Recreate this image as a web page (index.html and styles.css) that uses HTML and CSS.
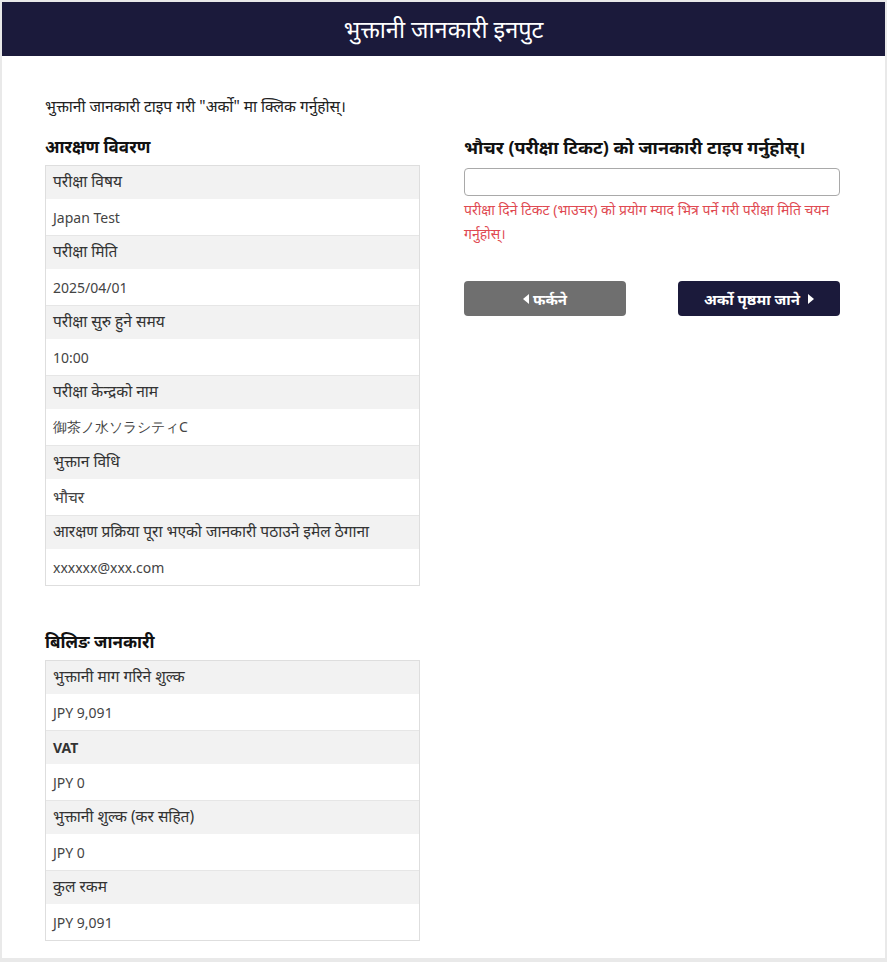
FILE: index.html
```html
<!DOCTYPE html>
<html lang="ne">

<head>
  <meta charset="UTF-8" />
  <meta name="viewport" content="width=device-width, initial-scale=1.0" />
  <title>भुक्तानी जानकारी इनपुट</title>
  <link rel="stylesheet" href="styles.css">
</head>

<body>
  <div class="pagina">
    <header>
      <h1>भुक्तानी जानकारी इनपुट</h1>
    </header>

    <main>
      <p class="intro">भुक्तानी जानकारी टाइप गरी "अर्को" मा क्लिक गर्नुहोस्।</p>

      <div class="columnas">
        <div class="columna">
          <h2>आरक्षण विवरण</h2>
          <dl class="tabla">
            <dt>परीक्षा विषय</dt>
            <dd>Japan Test</dd>
            <dt>परीक्षा मिति</dt>
            <dd>2025/04/01</dd>
            <dt>परीक्षा सुरु हुने समय</dt>
            <dd>10:00</dd>
            <dt>परीक्षा केन्द्रको नाम</dt>
            <dd>御茶ノ水ソラシティC</dd>
            <dt>भुक्तान विधि</dt>
            <dd class="deva">भौचर</dd>
            <dt>आरक्षण प्रक्रिया पूरा भएको जानकारी पठाउने इमेल ठेगाना</dt>
            <dd>xxxxxx@xxx.com</dd>
          </dl>

          <h2 class="billing">बिलिङ जानकारी</h2>
          <dl class="tabla">
            <dt>भुक्तानी माग गरिने शुल्क</dt>
            <dd>JPY 9,091</dd>
            <dt class="negrita">VAT</dt>
            <dd>JPY 0</dd>
            <dt>भुक्तानी शुल्क (कर सहित)</dt>
            <dd>JPY 0</dd>
            <dt>कुल रकम</dt>
            <dd>JPY 9,091</dd>
          </dl>
        </div>

        <div class="columna">
          <h2 class="titulo-voucher">भौचर (परीक्षा टिकट) को जानकारी टाइप गर्नुहोस्।</h2>
          <input type="text" class="campo" id="voucher">
          <p class="error">परीक्षा दिने टिकट (भाउचर) को प्रयोग म्याद भित्र पर्ने गरी परीक्षा मिति चयन गर्नुहोस्।</p>

          <div class="botones">
            <button class="btn btn-volver"><span class="flecha izq"></span>फर्कने</button>
            <button class="btn btn-siguiente">अर्को पृष्ठमा जाने<span class="flecha der"></span></button>
          </div>
        </div>
      </div>
    </main>
  </div>
</body>

</html>
```

FILE: styles.css
```css
body {
  font-family: "Noto Sans", "Open Sans", sans-serif;
  margin: 0;
  background-color: #e9e9e9;
  color: #333;
  padding: 2px;
}

.pagina {
  background-color: white;
  height: 956px;
}

header {
  background-color: #1b1a3b;
  color: white;
  height: 54px;
  display: flex;
  justify-content: center;
  align-items: center;
}

header h1 {
  margin: 0;
  font-size: 23.5px;
  font-weight: normal;
}

main {
  padding: 39px 45px 0 43px;
}

.intro {
  margin: 0 0 18px;
  font-size: 15.5px;
  color: #222;
}

.columnas {
  display: grid;
  grid-template-columns: 375px 376px;
  gap: 44px;
}

h2 {
  margin: 0 0 6px;
  font-size: 17px;
  font-weight: bold;
  color: #111;
  line-height: 24px;
}

h2.billing {
  margin-top: 44px;
}

h2.titulo-voucher {
  font-size: 18px;
  margin-bottom: 4px;
}

.tabla {
  margin: 0;
  border: 1px solid #dedede;
  font-size: 14px;
}

.tabla dt,
.tabla dd {
  margin: 0;
  padding: 0 7px;
  display: flex;
  align-items: center;
}

.tabla dt {
  background-color: #f2f2f2;
  height: 33px;
  box-sizing: border-box;
  padding-bottom: 3px;
  color: #333;
  font-size: 15.5px;
}

.tabla dt.negrita {
  font-size: 14px;
  font-weight: bold;
  padding-bottom: 0;
}

.tabla dd {
  background-color: white;
  height: 36px;
  border-bottom: 1px solid #e6e6e6;
  color: #444;
}

.tabla dd.deva {
  font-size: 15.5px;
}

.tabla dd:last-child {
  border-bottom: none;
}

.campo {
  display: block;
  box-sizing: border-box;
  width: 100%;
  height: 28px;
  margin-top: 9px;
  border: 1px solid #a9a9a9;
  border-radius: 4px;
  font-size: 14px;
  padding: 0 6px;
}

.error {
  margin: 2px 0 0;
  color: #e04a52;
  font-size: 14px;
  line-height: 24px;
}

.botones {
  display: flex;
  justify-content: space-between;
  margin-top: 35px;
}

.btn {
  width: 162px;
  height: 35px;
  border: none;
  border-radius: 4px;
  color: white;
  font-family: inherit;
  font-size: 15px;
  font-weight: bold;
  display: flex;
  justify-content: center;
  align-items: center;
  gap: 4px;
  cursor: pointer;
}

.btn-volver {
  background-color: #6f6f6f;
}

.btn-siguiente {
  background-color: #1b1a3b;
  gap: 8px;
}

.flecha {
  width: 0;
  height: 0;
  border-top: 5px solid transparent;
  border-bottom: 5px solid transparent;
}

.flecha.izq {
  border-right: 6px solid white;
}

.flecha.der {
  border-left: 6px solid white;
}
```
